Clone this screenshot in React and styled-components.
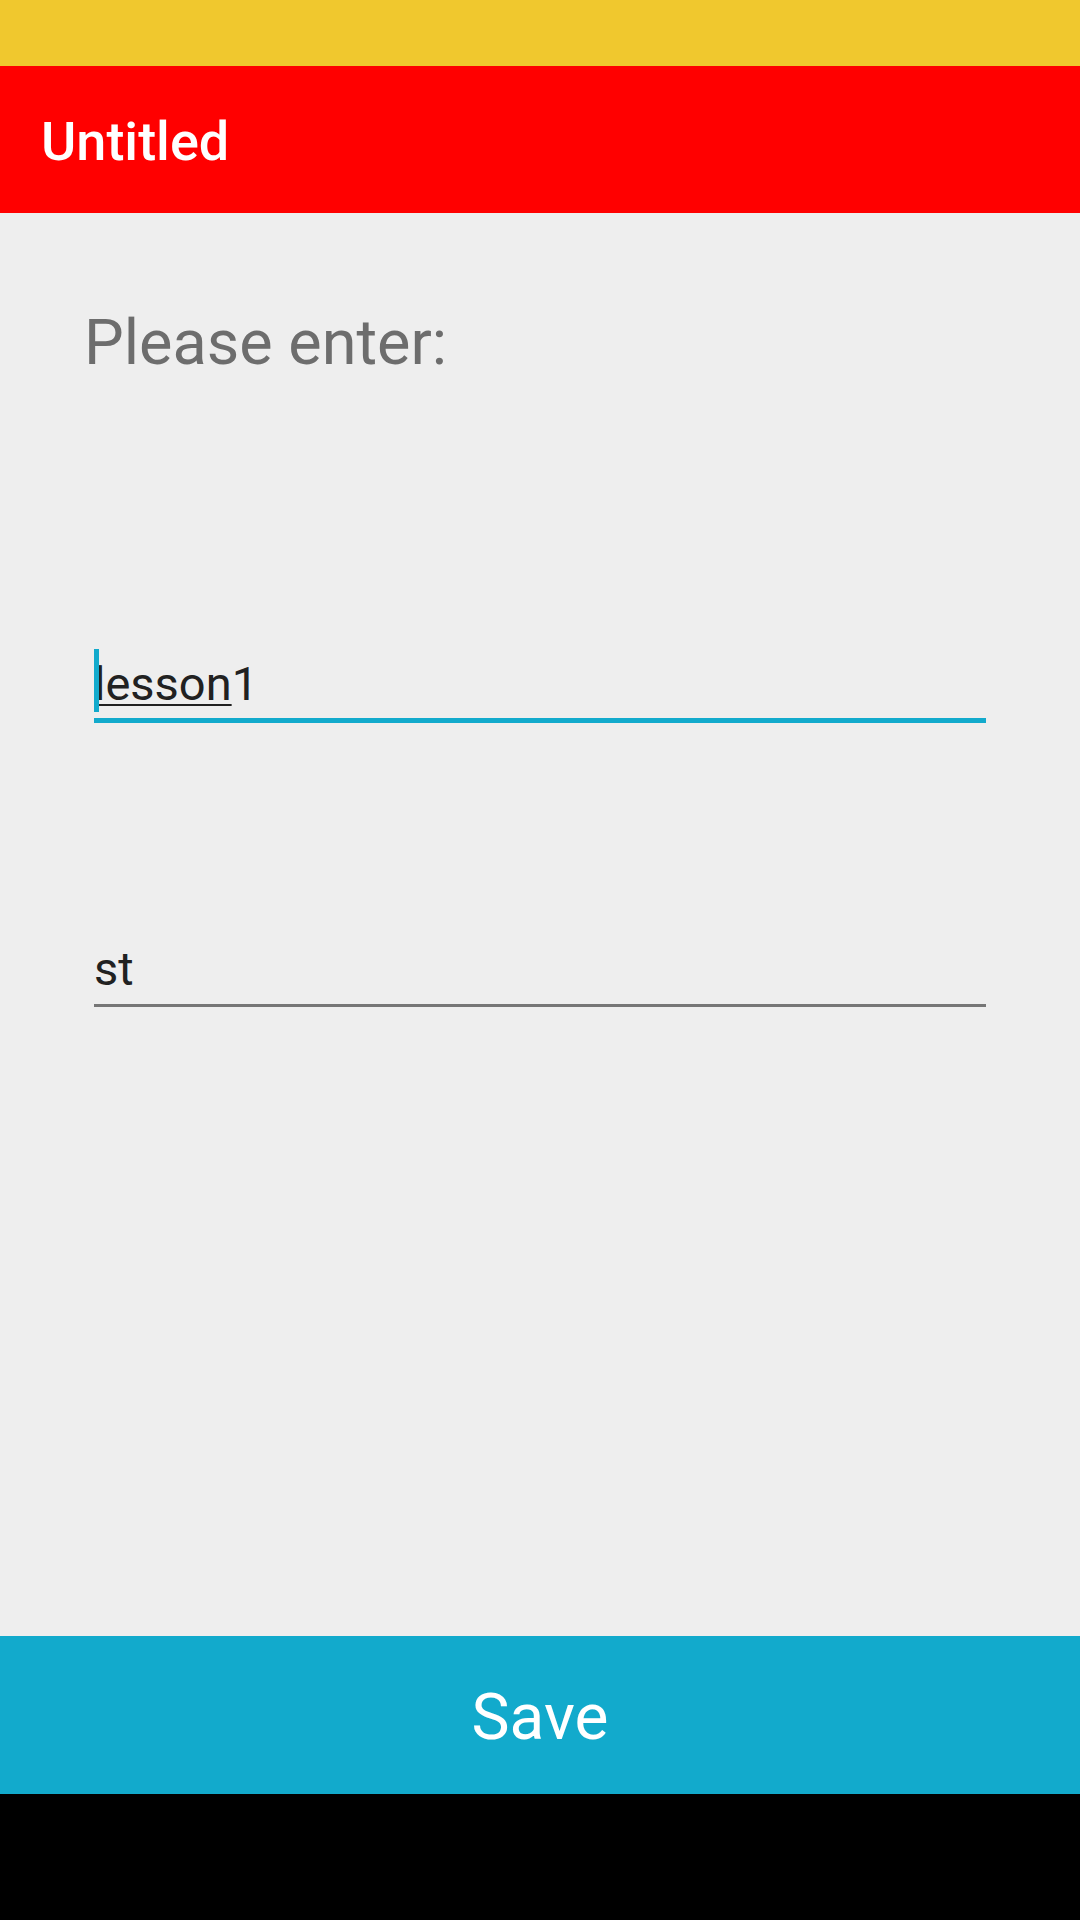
import React from "react";
import styled, { createGlobalStyle } from "styled-components";

const GlobalStyle = createGlobalStyle`
  html, body {
    margin: 0;
    padding: 0;
    background: #000;
  }
  * {
    box-sizing: border-box;
  }
`;

const Screen = styled.div`
  width: 1080px;
  height: 1920px;
  display: flex;
  flex-direction: column;
  background: #eeeeee;
  font-family: Roboto, "Noto Sans", sans-serif;
  overflow: hidden;
`;

const StatusBar = styled.div`
  height: 66px;
  flex-shrink: 0;
  background: #f0c82e;
`;

const AppBar = styled.div`
  height: 147px;
  flex-shrink: 0;
  background: #ff0000;
  padding: 49px 0 0 41px;
`;

const Title = styled.h1`
  margin: 0;
  font-size: 54px;
  line-height: 1;
  font-weight: 500;
  color: #ffffff;
`;

const Content = styled.div`
  flex: 1;
  display: flex;
  flex-direction: column;
  padding: 98px 94px 0 94px;
`;

const Prompt = styled.div`
  font-size: 63px;
  line-height: 1;
  color: #6d6d6d;
  margin-left: -10px;
`;

const Field = styled.div`
  position: relative;
  margin-top: ${({ $top }) => $top}px;
  padding-bottom: ${({ $gap }) => $gap}px;
  border-bottom: ${({ $focused }) =>
    $focused ? "5px solid #12aacc" : "3px solid #767676"};
  font-size: 47px;
  line-height: 1;
  color: #212121;
`;

const Cursor = styled.span`
  position: absolute;
  left: 0;
  top: -11px;
  width: 5px;
  height: 63px;
  background: #12aacc;
`;

const Composing = styled.span`
  text-decoration: underline;
  text-decoration-thickness: 2px;
  text-underline-offset: 4px;
`;

const SaveButton = styled.button`
  height: 158px;
  flex-shrink: 0;
  border: none;
  background: #12aacc;
  color: #ffffff;
  font-family: Roboto, "Noto Sans", sans-serif;
  font-size: 64px;
  line-height: 1;
  padding: 5px 0 0 0;
  display: flex;
  align-items: center;
  justify-content: center;
`;

const NavBar = styled.div`
  height: 126px;
  flex-shrink: 0;
  background: #000000;
`;

export default function App() {
  return (
    <>
      <GlobalStyle />
      <Screen>
        <StatusBar />
        <AppBar>
          <Title>Untitled</Title>
        </AppBar>
        <Content>
          <Prompt>Please enter:</Prompt>
          <Field $top={286} $gap={11} $focused>
            <Cursor />
            <Composing>lesson</Composing>1
          </Field>
          <Field $top={222} $gap={12}>
            st
          </Field>
        </Content>
        <SaveButton>Save</SaveButton>
        <NavBar />
      </Screen>
    </>
  );
}
